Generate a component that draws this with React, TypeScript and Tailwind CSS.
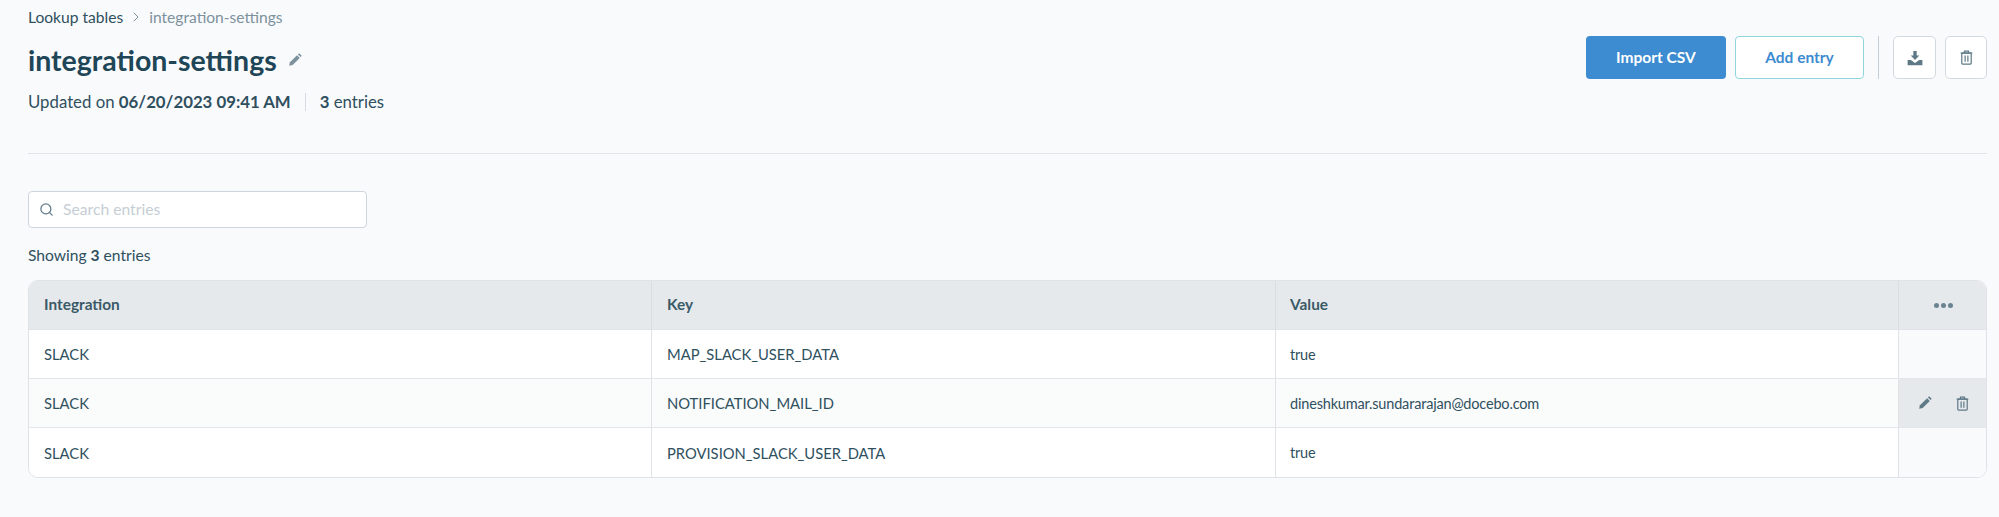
import { ChevronRight, Search } from "lucide-react";

function PencilIcon({ className }: { className?: string }) {
  return (
    <svg viewBox="0 0 24 24" className={className} fill="currentColor">
      <path d="M2 22l1.3-6L15.6 3.8l4.6 4.6L8 20.7 2 22z" />
      <path d="M17 2.4l1-1a1.5 1.5 0 0 1 2.1 0l2.5 2.5a1.5 1.5 0 0 1 0 2.1l-1 1L17 2.4z" />
    </svg>
  );
}

function TrashIcon({ className }: { className?: string }) {
  return (
    <svg viewBox="0 0 16 18" className={className} fill="none" stroke="currentColor" strokeWidth="1.5">
      <path d="M0.8 3.5h14.4" />
      <path d="M5.5 3.2V1.1h5v2.1" />
      <rect x="2.2" y="3.6" width="11.6" height="13.6" rx="1" />
      <path d="M6.3 6.5v7.8M9.7 6.5v7.8" />
    </svg>
  );
}

function DownloadIcon({ className }: { className?: string }) {
  return (
    <svg viewBox="0 0 16 16" className={className} fill="currentColor">
      <path d="M6.3 1h3.4v4.6h2.6L8 10 3.7 5.6h2.6V1z" />
      <path d="M0.6 10h3.2L8 13l4.2-3h3.2v5.2H0.6V10z" />
    </svg>
  );
}

const rows = [
  { integration: "SLACK", key: "MAP_SLACK_USER_DATA", value: "true" },
  { integration: "SLACK", key: "NOTIFICATION_MAIL_ID", value: "dineshkumar.sundararajan@docebo.com", active: true },
  { integration: "SLACK", key: "PROVISION_SLACK_USER_DATA", value: "true" },
];

export default function App() {
  return (
    <div className="h-[517px] w-[1999px] overflow-hidden bg-[#f9fafc] pl-[28px] pr-[12px] pt-[6px] font-['Lato',sans-serif] text-[14.75px] text-[#2f505e]">
      <div className="flex items-start justify-between">
        <div>
          <div className="flex h-5 items-center pt-px text-[15.6px] leading-5">
            <span>Lookup tables</span>
            <ChevronRight className="mx-[5px] h-4 w-4 text-[#7d929c]" strokeWidth={1.5} />
            <span className="text-[#7d929c]">integration-settings</span>
          </div>
          <div className="mt-[14px] flex h-10 items-center">
            <h1 className="text-[28.5px] font-bold leading-10 text-[#1f4657]">integration-settings</h1>
            <PencilIcon className="ml-[11px] h-[14px] w-[14px] text-[#7d929c]" />
          </div>
          <div className="mt-3 flex h-5 items-center text-[16.8px] leading-5">
            <span>
              Updated on <span className="font-bold">06/20/2023 09:41 AM</span>
            </span>
            <span className="mx-[14px] h-[18px] w-px bg-[#d5dbe0]" />
            <span>
              <span className="font-bold">3</span> entries
            </span>
          </div>
        </div>
        <div className="mt-[30px] flex items-center">
          <button className="h-[43px] w-[140px] rounded-[4px] bg-[#3d8bd0] text-[15.5px] font-bold text-white">
            Import CSV
          </button>
          <button className="ml-[9px] h-[43px] w-[129px] rounded-[4px] border border-[#8fd6de] bg-white text-[15.5px] font-bold text-[#3d8bd0]">
            Add entry
          </button>
          <span className="ml-[14px] h-[43px] w-px bg-[#c3ced5]" />
          <button className="ml-[14px] flex h-[43px] w-[43px] items-center justify-center rounded-[5px] border border-[#d3d9e0] bg-white text-[#5f7a87]">
            <DownloadIcon className="h-4 w-4" />
          </button>
          <button className="ml-[9px] flex h-[43px] w-[42px] items-center justify-center rounded-[5px] border border-[#d3d9e0] bg-white text-[#5f7a87]">
            <TrashIcon className="h-[15px] w-[13px]" />
          </button>
        </div>
      </div>

      <div className="mt-[41px] h-px bg-[#e1e4e9]" />

      <div className="mt-[37px] flex h-[37px] w-[339px] items-center rounded-[4px] border border-[#cfd5dc] bg-white pl-[10px]">
        <Search className="h-[15px] w-[15px] text-[#5f7a87]" strokeWidth={2} />
        <span className="ml-[9px] text-[15.7px] text-[#c5ced5]">Search entries</span>
      </div>

      <div className="mt-[17px] h-5 text-[15.6px] leading-5">
        Showing <span className="font-bold">3</span> entries
      </div>

      <div className="mt-[15px] overflow-hidden rounded-[10px] border border-[#dfe3e8] bg-white">
        <div className="grid h-[49px] grid-cols-[622px_624px_623px_89px] items-stretch border-b border-[#dfe3e8] bg-[#e6e9ec] text-[15.4px] font-bold text-[#3a5a68]">
          <div className="flex items-center pl-[15px]">Integration</div>
          <div className="flex items-center border-l border-[#d9dee3] pl-[15px]">Key</div>
          <div className="flex items-center border-l border-[#d9dee3] pl-[14px]">Value</div>
          <div className="flex items-center justify-center gap-[2px] border-l border-[#d9dee3]">
            <span className="h-[5px] w-[5px] rounded-full bg-[#6b8492]" />
            <span className="h-[5px] w-[5px] rounded-full bg-[#6b8492]" />
            <span className="h-[5px] w-[5px] rounded-full bg-[#6b8492]" />
          </div>
        </div>
        {rows.map((row, i) => (
          <div
            key={row.key}
            className={
              "grid h-[49px] grid-cols-[622px_624px_623px_89px] items-stretch " +
              (i < 2 ? "border-b border-[#e2e5ea] " : "") +
              (row.active ? "bg-[#fafbfb]" : "bg-white")
            }
          >
            <div className="flex items-center pl-[15px] pt-px">{row.integration}</div>
            <div className="flex items-center border-l border-[#dfe3e8] pl-[15px] pt-px">{row.key}</div>
            <div className="flex items-center border-l border-[#dfe3e8] pl-[14px] pt-px text-[14.5px] tracking-[-0.18px]">{row.value}</div>
            <div
              className={
                "flex items-center justify-center gap-[24px] border-l border-[#dfe3e8] " +
                (row.active ? "bg-[#e6e9ec]" : "bg-[#f9fafc]")
              }
            >
              {row.active && (
                <>
                  <PencilIcon className="h-[14px] w-[14px] text-[#5f7a87]" />
                  <TrashIcon className="h-[15px] w-[13px] text-[#5f7a87]" />
                </>
              )}
            </div>
          </div>
        ))}
      </div>
    </div>
  );
}
